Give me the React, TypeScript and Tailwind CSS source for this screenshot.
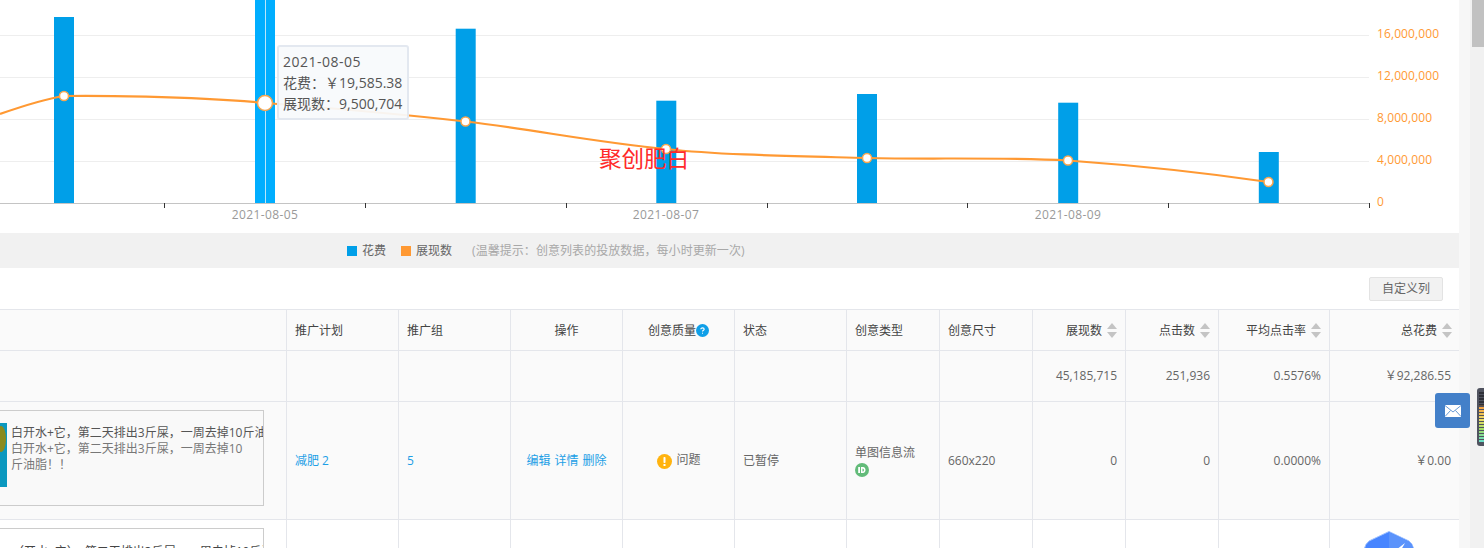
const font = { fontFamily: '"Open Sans", "Noto Sans CJK SC", sans-serif' };

const bars = [
  { x: 54, top: 17 },
  { x: 255, top: 0 },
  { x: 455.7, top: 28.7 },
  { x: 656.3, top: 100.7 },
  { x: 857, top: 94 },
  { x: 1058.2, top: 102.7 },
  { x: 1258.8, top: 152 },
];
const points = [
  [64, 96],
  [465.5, 121.5],
  [666, 149],
  [867, 158],
  [1068, 160.5],
  [1268.5, 182],
];
const ticks = [164, 365, 566, 767, 967, 1168, 1369];
const gridY = [35, 77, 119, 161];
const yLabels = [
  { y: 33, t: "16,000,000" },
  { y: 75, t: "12,000,000" },
  { y: 117, t: "8,000,000" },
  { y: 159, t: "4,000,000" },
  { y: 201, t: "0" },
];
const dates = [
  { x: 265, t: "2021-08-05" },
  { x: 666, t: "2021-08-07" },
  { x: 1068, t: "2021-08-09" },
];

const columns =
  "grid grid-cols-[287px_112px_112px_112px_112px_112px_93px_93px_93px_93px_111px_130px]";

function Chart() {
  return (
    <div className="relative h-[233px] bg-white">
      <svg width="1459" height="233" className="block">
        {gridY.map((y) => (
          <line key={y} x1="0" x2="1369" y1={y + 0.5} y2={y + 0.5} stroke="#eeeeee" />
        ))}
        {bars.map((b, i) => (
          <rect
            key={b.x}
            x={b.x}
            y={b.top}
            width="20"
            height={203 - b.top}
            fill={i === 1 ? "#00aeff" : "#009fe8"}
          />
        ))}
        <line x1="265.5" x2="265.5" y1="0" y2="203" stroke="#b9e6fb" />
        <line x1="0" x2="1369" y1="203.5" y2="203.5" stroke="#c4c4c4" />
        {ticks.map((x) => (
          <line key={x} x1={x + 0.5} x2={x + 0.5} y1="203" y2="208" stroke="#333333" />
        ))}
        <path
          d="M0 114 C20 107 45 99 64 96 C90 95.5 190 96 265 103 C330 108 400 114 465.5 121.5 C530 129 600 143 666 149 C720 155 790 156 867 158 C930 159.5 1000 157 1068 160.5 C1130 165 1200 172 1268.5 182"
          fill="none"
          stroke="#ff9933"
          strokeWidth="2.2"
        />
        {points.map(([x, y]) => (
          <circle key={x} cx={x} cy={y} r="4.5" fill="#ffffff" stroke="#f9a64f" strokeWidth="1.5" />
        ))}
        <circle cx="265" cy="103" r="7.5" fill="#ffffff" stroke="#f9a64f" strokeWidth="1.5" />
        {dates.map((d) => (
          <text
            key={d.x}
            x={d.x}
            y="219"
            textAnchor="middle"
            fontSize="12"
            fill="#999999"
            className="tracking-[0.4px]"
            style={font}
          >
            {d.t}
          </text>
        ))}
        {yLabels.map((l) => (
          <text key={l.t} x="1377" y={l.y + 5} fontSize="12" fill="#ff9933" className="tracking-[0.1px]" style={font}>
            {l.t}
          </text>
        ))}
      </svg>

      {/* tooltip */}
      <div className="absolute left-[277px] top-[45px] w-[132px] h-[75px] rounded-[3px] border-2 border-[#e3e8f0] bg-[#f8fafcee] pl-[4px] pt-[4px] text-[14px] leading-[21px] text-[#555555] whitespace-nowrap">
        <div className="tracking-[0.5px]">2021-08-05</div>
        <div>花费：￥19,585.38</div>
        <div>展现数：9,500,704</div>
      </div>

      {/* watermark */}
      <div className="absolute left-[599px] top-[144px] text-[22.5px] leading-[30px] text-[#ff2a2a] whitespace-nowrap">
        聚创肥白
      </div>
    </div>
  );
}

function Legend() {
  return (
    <div className="h-[35px] bg-[#f1f1f1] flex items-center pl-[347px] pt-[1px] text-[12px] text-[#666666] whitespace-nowrap">
      <span className="w-[10px] h-[10px] bg-[#009fe8]" />
      <span className="ml-[5px]">花费</span>
      <span className="ml-[15px] w-[10px] h-[10px] bg-[#ff9933]" />
      <span className="ml-[5px]">展现数</span>
      <span className="ml-[20px] tracking-[0.06px] text-[#a8a8a8]">(温馨提示：创意列表的投放数据，每小时更新一次)</span>
    </div>
  );
}

function SortIcon() {
  return (
    <svg width="10" height="15" viewBox="0 0 10 15" className="ml-[5px] shrink-0">
      <path d="M5 0 L10 6 H0 Z" fill="#c4c4c4" />
      <path d="M5 15 L10 9 H0 Z" fill="#c4c4c4" />
    </svg>
  );
}

function Cell({ className = "", children }: { className?: string; children?: React.ReactNode }) {
  return (
    <div className={`border-r border-[#e4e6eb] flex items-center min-w-0 px-[8px] ${className}`}>
      {children}
    </div>
  );
}

function HeaderRow() {
  return (
    <div className={`${columns} h-[42px] bg-[#fafafa] border-y border-[#e4e6eb] text-[12px] text-[#444444]`}>
      <Cell />
      <Cell className="pt-[1px]">推广计划</Cell>
      <Cell className="pt-[1px]">推广组</Cell>
      <Cell className="justify-center pt-[1px]">操作</Cell>
      <Cell className="justify-center pt-[1px]">
        创意质量
        <svg width="13" height="13" viewBox="0 0 13 13">
          <circle cx="6.5" cy="6.5" r="6.5" fill="#0f9fe8" />
          <path d="M4.8 5.2 C4.8 3.4 8.2 3.4 8.2 5.2 C8.2 6.3 6.5 6.3 6.5 7.6" fill="none" stroke="#ffffff" strokeWidth="1.1" />
          <rect x="6" y="8.7" width="1" height="1" fill="#ffffff" />
        </svg>
      </Cell>
      <Cell className="pt-[1px]">状态</Cell>
      <Cell className="pt-[1px]">创意类型</Cell>
      <Cell className="pt-[1px]">创意尺寸</Cell>
      <Cell className="justify-end pt-[1px]">
        展现数
        <SortIcon />
      </Cell>
      <Cell className="justify-end pt-[1px]">
        点击数
        <SortIcon />
      </Cell>
      <Cell className="justify-end pt-[1px]">
        平均点击率
        <SortIcon />
      </Cell>
      <Cell className="justify-end border-r-0 pt-[1px]">
        总花费
        <SortIcon />
      </Cell>
    </div>
  );
}

function SumRow() {
  return (
    <div className={`${columns} h-[51px] bg-[#fafafa] border-b border-[#e4e6eb] text-[12px] text-[#666666]`}>
      <Cell />
      <Cell />
      <Cell />
      <Cell />
      <Cell />
      <Cell />
      <Cell />
      <Cell />
      <Cell className="justify-end">45,185,715</Cell>
      <Cell className="justify-end">251,936</Cell>
      <Cell className="justify-end">0.5576%</Cell>
      <Cell className="justify-end border-r-0 !pr-[9px]">￥92,286.55</Cell>
    </div>
  );
}

function CreativeCard() {
  return (
    <div className="mt-[8px] w-[264px] h-[96px] border border-l-0 border-[#cccccc] bg-[#f9f9f9] flex items-start overflow-hidden">
      <svg width="7" height="64" viewBox="0 0 7 64" className="mt-[12px] shrink-0">
        <rect width="7" height="64" fill="#0b98bf" />
        <ellipse cx="1" cy="16" rx="5" ry="13" fill="#8a8a1e" />
      </svg>
      <div className="ml-[4px] mt-[14px] w-[252px] min-w-0 text-[12px] leading-[16px]">
        <div className="whitespace-nowrap text-[#555555]">白开水+它，第二天排出3斤屎，一周去掉10斤油脂！！</div>
        <div className="w-[236px] text-[#777777]">白开水+它，第二天排出3斤屎，一周去掉10斤油脂！！</div>
      </div>
    </div>
  );
}

function DataRow() {
  return (
    <div className={`${columns} h-[118px] bg-[#fafafa] border-b border-[#e4e6eb] text-[12px] text-[#666666]`}>
      <div className="border-r border-[#e4e6eb]">
        <CreativeCard />
      </div>
      <Cell className="text-[#1d9fe6]">减肥 2</Cell>
      <Cell className="text-[#1d9fe6]">5</Cell>
      <Cell className="justify-center gap-[4px] text-[#1d9fe6] whitespace-nowrap">
        <span>编辑</span>
        <span>详情</span>
        <span>删除</span>
      </Cell>
      <Cell className="justify-center">
        <svg width="15" height="15" viewBox="0 0 15 15" className="mr-[4px] ml-[1px] mt-[1px]">
          <circle cx="7.5" cy="7.5" r="7.5" fill="#ffb30f" />
          <rect x="6.5" y="3" width="2" height="6" rx="0.8" fill="#ffffff" />
          <rect x="6.5" y="10" width="2" height="2" fill="#ffffff" />
        </svg>
        <span className="-mt-[1px]">问题</span>
      </Cell>
      <Cell>已暂停</Cell>
      <Cell className="flex-col !items-start justify-center">
        <div>单图信息流</div>
        <svg width="14" height="14" viewBox="0 0 14 14" className="mt-[1px]">
          <circle cx="7" cy="7" r="7" fill="#62bb79" />
          <rect x="3.2" y="4" width="1.8" height="6" fill="#ffffff" />
          <path d="M6 4 H8 C11.4 4 11.4 10 8 10 H6 Z M7.5 5.4 V8.6 C9.4 8.6 9.4 5.4 7.5 5.4 Z" fill="#ffffff" fillRule="evenodd" />
        </svg>
      </Cell>
      <Cell>660x220</Cell>
      <Cell className="justify-end">0</Cell>
      <Cell className="justify-end">0</Cell>
      <Cell className="justify-end">0.0000%</Cell>
      <Cell className="justify-end border-r-0 !pr-[9px]">￥0.00</Cell>
    </div>
  );
}

function NextRow() {
  return (
    <div className={`${columns} h-[118px] bg-white text-[12px]`}>
      <div className="border-r border-[#e4e6eb]">
        <div className="mt-[8px] w-[264px] h-[96px] border border-l-0 border-[#cccccc] bg-white overflow-hidden">
          <div className="mt-[15px] pl-[12px] whitespace-nowrap leading-[16px] text-[#444444]">
            （开水+它），第二天排出3斤屎，一周去掉10斤油）
          </div>
        </div>
      </div>
      <Cell />
      <Cell />
      <Cell />
      <Cell />
      <Cell />
      <Cell />
      <Cell />
      <Cell />
      <Cell />
      <Cell />
      <Cell className="border-r-0" />
    </div>
  );
}

export default function App() {
  return (
    <div className="relative h-[548px] overflow-hidden flex bg-[#f7f7f7]" style={font}>
      <div className="w-[1459px] shrink-0">
        <Chart />
        <Legend />
        <div className="h-[41px] bg-white flex items-center justify-end pr-[16px]">
          <button className="w-[74px] h-[24px] rounded-[2px] border border-[#e3e3e3] bg-[#f2f2f2] text-[12px] text-[#666666]">
            自定义列
          </button>
        </div>
        <HeaderRow />
        <SumRow />
        <DataRow />
        <NextRow />
      </div>
      <div className="w-[11px] shrink-0" />
      <div className="w-[14px] shrink-0 bg-[#f1f1f1] pl-[2px]">
        <div className="h-[47px] bg-[#c1c1c1]" />
      </div>

      {/* floating mail button */}
      <div className="absolute left-[1435px] top-[393px] w-[35px] h-[35px] rounded-[3px] bg-[#4380c9] flex items-center justify-center">
        <svg width="16" height="12" viewBox="0 0 16 12">
          <rect width="16" height="12" fill="#ffffff" />
          <path d="M0 0.5 L8 7 L16 0.5 M0 11.5 L5.5 5.5 M16 11.5 L10.5 5.5" fill="none" stroke="#4380c9" strokeWidth="0.8" />
        </svg>
      </div>

      {/* side widget */}
      <div className="absolute left-[1477px] top-[388px] w-[7px] h-[58px] rounded-l-[3px] bg-[#50535f] pl-[2px] py-[4px]">
        <div className="h-full bg-[repeating-linear-gradient(to_bottom,transparent_0,transparent_2px,#50535f_2px,#50535f_3px),linear-gradient(to_bottom,#2f3038_0%,#2f3038_26%,#f4a040_30%,#eedd66_55%,#a0dd66_75%,#66ddcc_100%)]" />
      </div>

      {/* floating logo */}
      <svg width="52" height="20" viewBox="0 0 52 20" className="absolute left-[1363px] top-[530px]">
        <path d="M26 1.5 L46 11 Q50 14 51 20 H1 Q2 14 6 11 Z" fill="#4785ff" stroke="#9fc2ff" strokeWidth="1" />
        <path d="M26 2 L46 11.5 Q50 14 50.5 20 H26 Z" fill="#5b93fb" />
        <path d="M42 13 L33 20 H38 Z" fill="#ffffff" />
      </svg>
    </div>
  );
}
